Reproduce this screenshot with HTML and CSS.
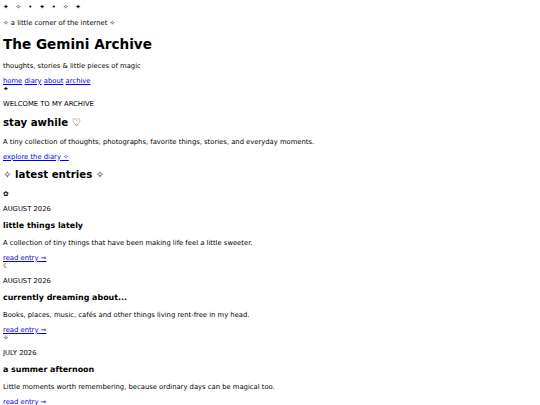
FILE: index.html
```html
<!DOCTYPE html>
<html lang="en">
<head>
<meta charset="utf-8">
<title>The Gemini Archive</title>
<link rel="stylesheet" href="styles.css">
</head>
<body>
<header class="site-header">
  <div class="sparkles">✦ ✧ • ✦ • ✧ ✦</div>
  <p class="tagline">✧ a little corner of the internet ✧</p>
  <h1>The Gemini Archive</h1>
  <p class="subtitle">thoughts, stories &amp; little pieces of magic</p>
  <nav class="nav"><a href="#">home</a> <a href="#">diary</a> <a href="#">about</a> <a href="#">archive</a></nav>
</header>
<div class="divider">✦</div>
<section class="welcome">
  <p class="eyebrow">WELCOME TO MY ARCHIVE</p>
  <h2>stay awhile ♡</h2>
  <p class="lead">A tiny collection of thoughts, photographs, favorite things, stories, and everyday moments.</p>
  <a href="#">explore the diary ✧</a>
</section>
<section class="entries">
  <h2>✧ latest entries ✧</h2>
  <article class="entry">
    <div class="icon">✿</div>
    <p class="date">AUGUST 2026</p>
    <h3>little things lately</h3>
    <p>A collection of tiny things that have been making life feel a little sweeter.</p>
    <a href="#">read entry →</a>
  </article>
  <article class="entry">
    <div class="icon">☾</div>
    <p class="date">AUGUST 2026</p>
    <h3>currently dreaming about...</h3>
    <p>Books, places, music, cafés and other things living rent-free in my head.</p>
    <a href="#">read entry →</a>
  </article>
  <article class="entry">
    <div class="icon">✧</div>
    <p class="date">JULY 2026</p>
    <h3>a summer afternoon</h3>
    <p>Little moments worth remembering, because ordinary days can be magical too.</p>
    <a href="#">read entry →</a>
  </article>
</section>
</body>
</html>
```

FILE: styles.css
```css
body {
  margin: 3px;
  font-family: "DejaVu Sans", Verdana, sans-serif;
  font-size: 6.8px;
  line-height: 1.21;
  color: #000;
  background: #fff;
}
p {
  margin: 1em 0;
}
h1 {
  font-size: 2em;
  margin: 0.67em 0;
}
h2 {
  font-size: 1.5em;
  margin: 0.83em 0;
}
h3 {
  font-size: 1.17em;
  margin: 1em 0;
}
a {
  color: #00e;
}
.sparkles {
  letter-spacing: 0.35em;
  padding-bottom: 1px;
}
```
